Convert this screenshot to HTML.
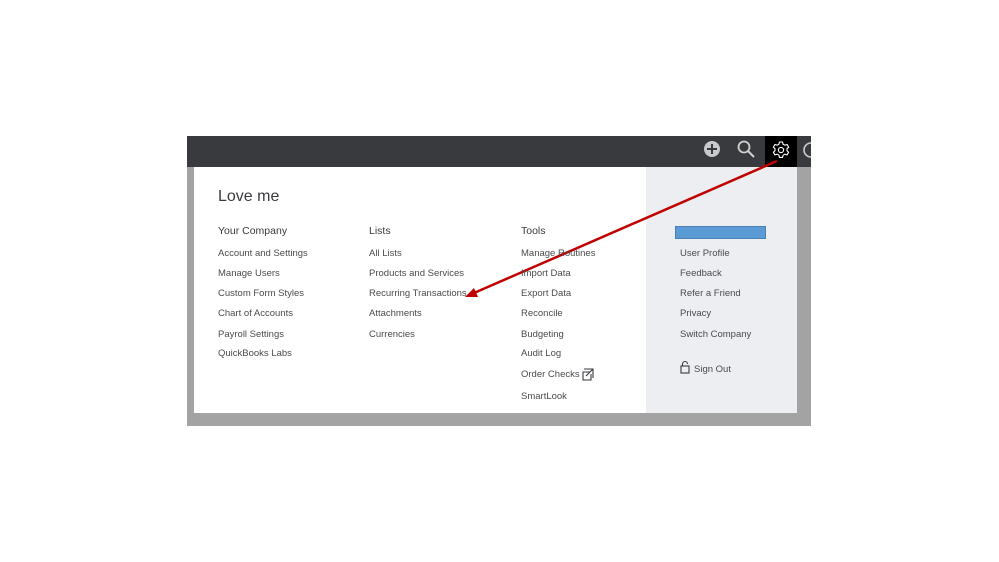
<!DOCTYPE html><html><head><style>
body{margin:0;width:999px;height:562px;background:#fff;position:relative;font-family:"Liberation Sans",sans-serif;overflow:hidden}
.a{position:absolute}
.t{position:absolute;font-size:9.5px;color:#4a4b4e;white-space:nowrap}
.h{position:absolute;font-size:10.5px;color:#393a3d}
</style></head><body>
<div class="a" style="left:187px;top:136px;width:624px;height:290px;background:#a3a3a3"></div>
<div class="a" style="left:187px;top:136px;width:624px;height:31px;background:#393a3e"></div>
<div class="a" style="left:765px;top:136px;width:32px;height:31px;background:#000"></div>
<div class="a" style="left:765px;top:167px;width:0;height:0;border-left:16px solid transparent;border-right:16px solid transparent;border-top:4px solid #000"></div>
<div class="a" style="left:194px;top:167px;width:452px;height:246px;background:#fff"></div>
<div class="a" style="left:646px;top:167px;width:151px;height:246px;background:#eceef1"></div>
<svg class="a" style="left:0;top:0" width="999" height="562">
<circle cx="712" cy="149" r="8" fill="#c8c9cc"/><path d="M712 144v10M707 149h10" stroke="#393a3e" stroke-width="2"/>
<circle cx="744" cy="147" r="5.5" fill="none" stroke="#d0d0d0" stroke-width="1.8"/><path d="M748 151l6 6" stroke="#d0d0d0" stroke-width="2"/>
<circle cx="781" cy="150" r="2.6" fill="none" stroke="#fff" stroke-width="1.1"/>
<path d="M779.5 142h3l.6 2.2 1.8 1 2.2-.7 1.5 2.6-1.6 1.6v2l1.6 1.6-1.5 2.6-2.2-.7-1.8 1-.6 2.2h-3l-.6-2.2-1.8-1-2.2.7-1.5-2.6 1.6-1.6v-2l-1.6-1.6 1.5-2.6 2.2.7 1.8-1z" fill="none" stroke="#fff" stroke-width="1.1"/>
<path d="M811 143a7 7 0 0 0 0 14" fill="none" stroke="#ccc" stroke-width="1.6"/>
<line x1="777" y1="161" x2="474" y2="293" stroke="#c00000" stroke-width="2.5"/>
<polygon points="465,297 474,288 478,297" fill="#c00000"/>
<path d="M584 369h9v9M593 369l-7 7M590 372h-7v8h8v-6" fill="none" stroke="#393a3d" stroke-width="1.1"/>
<rect x="681" y="366" width="8" height="7" fill="none" stroke="#393a3d" stroke-width="1.1"/><path d="M682.5 366v-2a2.5 2.5 0 0 1 5 0" fill="none" stroke="#393a3d" stroke-width="1.1"/>
</svg>
<div class="a" style="left:675px;top:226px;width:89px;height:11px;background:#5b9bd5;border:1px solid #4a80b5"></div>
<div class="a" style="left:218px;top:188px;font-size:16px;color:#393a3d">Love me</div>
<div class="h" style="left:218px;top:225px">Your Company</div>
<div class="t" style="left:218px;top:248px">Account and Settings</div>
<div class="t" style="left:218px;top:268px">Manage Users</div>
<div class="t" style="left:218px;top:288px">Custom Form Styles</div>
<div class="t" style="left:218px;top:308px">Chart of Accounts</div>
<div class="t" style="left:218px;top:329px">Payroll Settings</div>
<div class="t" style="left:218px;top:348px">QuickBooks Labs</div>
<div class="h" style="left:369px;top:225px">Lists</div>
<div class="t" style="left:369px;top:248px">All Lists</div>
<div class="t" style="left:369px;top:268px">Products and Services</div>
<div class="t" style="left:369px;top:288px">Recurring Transactions</div>
<div class="t" style="left:369px;top:308px">Attachments</div>
<div class="t" style="left:369px;top:329px">Currencies</div>
<div class="h" style="left:521px;top:225px">Tools</div>
<div class="t" style="left:521px;top:248px">Manage Routines</div>
<div class="t" style="left:521px;top:268px">Import Data</div>
<div class="t" style="left:521px;top:288px">Export Data</div>
<div class="t" style="left:521px;top:308px">Reconcile</div>
<div class="t" style="left:521px;top:329px">Budgeting</div>
<div class="t" style="left:521px;top:348px">Audit Log</div>
<div class="t" style="left:521px;top:369px">Order Checks</div>
<div class="t" style="left:521px;top:391px">SmartLook</div>
<div class="t" style="left:680px;top:248px">User Profile</div>
<div class="t" style="left:680px;top:268px">Feedback</div>
<div class="t" style="left:680px;top:288px">Refer a Friend</div>
<div class="t" style="left:680px;top:308px">Privacy</div>
<div class="t" style="left:680px;top:329px">Switch Company</div>
<div class="t" style="left:694px;top:364px">Sign Out</div>
</body></html>
